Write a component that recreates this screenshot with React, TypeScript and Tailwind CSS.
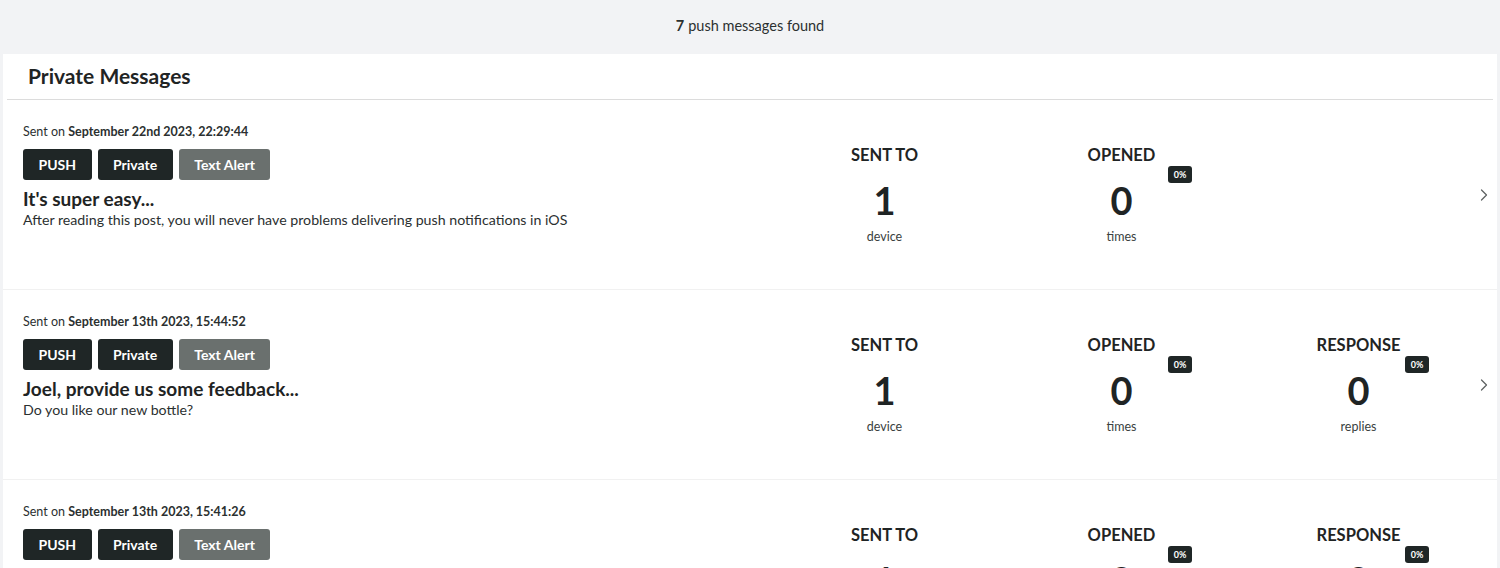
import React from "react"
import { ChevronRight } from "lucide-react"

type Msg = {
  sentOn: string
  title: string
  body: string
  sent: number
  opened: number
  response?: number
}

const messages: Msg[] = [
  {
    sentOn: "September 22nd 2023, 22:29:44",
    title: "It's super easy...",
    body: "After reading this post, you will never have problems delivering push notifications in iOS",
    sent: 1,
    opened: 0,
  },
  {
    sentOn: "September 13th 2023, 15:44:52",
    title: "Joel, provide us some feedback...",
    body: "Do you like our new bottle?",
    sent: 1,
    opened: 0,
    response: 0,
  },
  {
    sentOn: "September 13th 2023, 15:41:26",
    title: "Tell us what you think...",
    body: "We would love to hear from you",
    sent: 1,
    opened: 0,
    response: 0,
  },
]

const Stat = ({ label, value, unit, pct }: { label: string; value?: number; unit?: string; pct?: string }) => (
  <div className="relative w-[237px] shrink-0 flex flex-col items-center pt-[45px]">
    <div className="text-[16.5px] font-bold leading-[20px] text-[#1f2424] uppercase">{label}</div>
    {value !== undefined && (
      <>
        <div className="mt-[13px] text-[38px] font-bold leading-[44px] text-[#1f2424]">{value}</div>
        <div className="mt-[7px] text-[12.5px] leading-[16px] text-[#3a3f3f]">{unit}</div>
      </>
    )}
    {pct && (
      <div className="absolute left-[165px] top-[66px] h-[17px] w-[24px] rounded-[3px] bg-[#1f2626] text-white text-[9px] font-bold leading-[17px] text-center">
        {pct}
      </div>
    )}
  </div>
)

const Tag = ({ children, muted }: { children: React.ReactNode; muted?: boolean }) => (
  <span
    className={`inline-flex h-[31px] items-center rounded-[3px] px-[15.5px] text-[14px] font-bold text-white ${
      muted ? "bg-[#6a706e]" : "bg-[#1f2626]"
    }`}
  >
    {children}
  </span>
)

function MessageRow({ msg }: { msg: Msg }) {
  return (
    <div className="flex h-[190px] border-b border-[#f1f1f1]">
      <div className="flex-1 pl-[20px] pt-[24px]">
        <div className="text-[12.5px] leading-[16px] text-[#2b3030]">
          Sent on <span className="font-bold">{msg.sentOn}</span>
        </div>
        <div className="mt-[9px] flex gap-[6px]">
          <Tag>PUSH</Tag>
          <Tag>Private</Tag>
          <Tag muted>Text Alert</Tag>
        </div>
        <div className="mt-[8px] text-[19px] font-bold leading-[22px] text-[#1f2424]">{msg.title}</div>
        <div className="mt-[1px] text-[14.2px] leading-[18px] text-[#2b3030]">{msg.body}</div>
      </div>
      <Stat label="Sent to" value={msg.sent} unit="device" />
      <Stat label="Opened" value={msg.opened} unit="times" pct="0%" />
      {msg.response !== undefined ? (
        <Stat label="Response" value={msg.response} unit="replies" pct="0%" />
      ) : (
        <div className="w-[237px] shrink-0" />
      )}
      <div className="w-[20px] shrink-0 flex items-center justify-start">
        <ChevronRight size={20} strokeWidth={1.5} className="text-[#5f6363] -ml-[3px]" />
      </div>
    </div>
  )
}

export default function App() {
  return (
    <div
      className="h-[568px] overflow-hidden bg-[#f2f3f5] pl-[3px] pr-[3px]"
      style={{ fontFamily: '"Lato", "Open Sans", sans-serif' }}
    >
      <div className="flex h-[54px] items-center justify-center pb-[3px] text-[14.5px] text-[#2b3030]">
        <span className="font-bold mr-[4px]">7</span> push messages found
      </div>
      <div className="bg-white">
        <div className="mx-[4px] border-b border-[#dcdcdc] pl-[21px] pt-[9px] pb-[10px]">
          <h1 className="text-[21px] font-bold leading-[26px] text-[#1f2424]">Private Messages</h1>
        </div>
        {messages.map((m, i) => (
          <MessageRow key={i} msg={m} />
        ))}
      </div>
    </div>
  )
}
